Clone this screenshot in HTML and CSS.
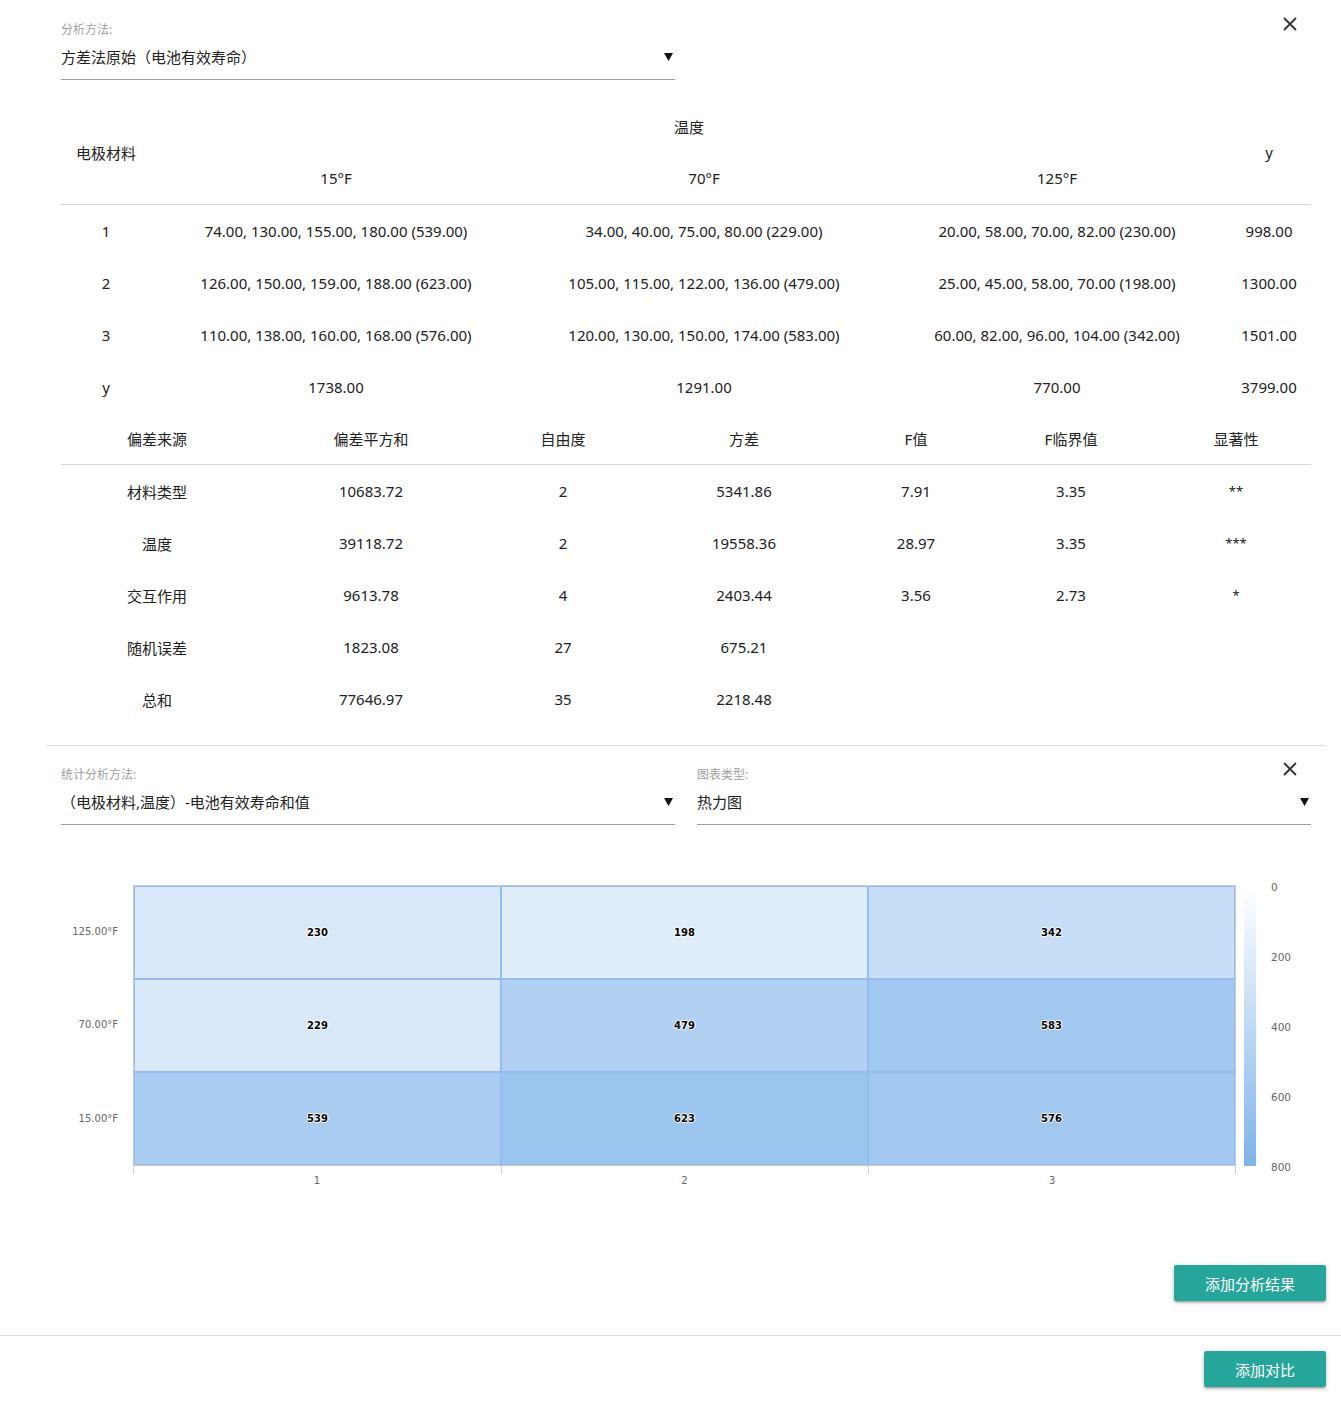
FILE: index.html
```html
<!DOCTYPE html>
<html lang="zh-CN">
<head>
<meta charset="utf-8">
<title>方差分析</title>
<link rel="stylesheet" href="styles.css">
</head>
<body>
<div class="main">
  <section class="panel">
    <button class="close" aria-label="关闭"><svg viewBox="0 0 16 16" width="16" height="16"><path d="M2 2L14 14M14 2L2 14"/></svg></button>
    <div class="fields">
      <div class="field">
        <span class="field-label">分析方法:</span>
        <div class="select"><span>方差法原始（电池有效寿命）</span><svg class="caret" viewBox="0 0 9 9" width="9" height="9"><polygon points="0,1 9,1 4.5,9"/></svg></div>
      </div>
    </div>

    <table class="grid-table raw">
      <colgroup><col class="r1"><col class="r2"><col class="r3"><col class="r4"><col class="r5"></colgroup>
      <thead>
        <tr><th rowspan="2" class="span-head">电极材料</th><th colspan="3">温度</th><th rowspan="2" class="span-head">y</th></tr>
        <tr class="head-last"><th>15°F</th><th>70°F</th><th>125°F</th></tr>
      </thead>
      <tbody>
        <tr><td>1</td><td>74.00, 130.00, 155.00, 180.00 (539.00)</td><td>34.00, 40.00, 75.00, 80.00 (229.00)</td><td>20.00, 58.00, 70.00, 82.00 (230.00)</td><td>998.00</td></tr>
        <tr><td>2</td><td>126.00, 150.00, 159.00, 188.00 (623.00)</td><td>105.00, 115.00, 122.00, 136.00 (479.00)</td><td>25.00, 45.00, 58.00, 70.00 (198.00)</td><td>1300.00</td></tr>
        <tr><td>3</td><td>110.00, 138.00, 160.00, 168.00 (576.00)</td><td>120.00, 130.00, 150.00, 174.00 (583.00)</td><td>60.00, 82.00, 96.00, 104.00 (342.00)</td><td>1501.00</td></tr>
        <tr><td>y</td><td>1738.00</td><td>1291.00</td><td>770.00</td><td>3799.00</td></tr>
      </tbody>
    </table>

    <table class="grid-table result">
      <colgroup><col class="s1"><col class="s2"><col class="s3"><col class="s4"><col class="s5"><col class="s6"><col class="s7"></colgroup>
      <thead>
        <tr class="head-last"><th>偏差来源</th><th>偏差平方和</th><th>自由度</th><th>方差</th><th>F值</th><th>F临界值</th><th>显著性</th></tr>
      </thead>
      <tbody>
        <tr><td>材料类型</td><td>10683.72</td><td>2</td><td>5341.86</td><td>7.91</td><td>3.35</td><td class="sig">**</td></tr>
        <tr><td>温度</td><td>39118.72</td><td>2</td><td>19558.36</td><td>28.97</td><td>3.35</td><td class="sig">***</td></tr>
        <tr><td>交互作用</td><td>9613.78</td><td>4</td><td>2403.44</td><td>3.56</td><td>2.73</td><td class="sig">*</td></tr>
        <tr><td>随机误差</td><td>1823.08</td><td>27</td><td>675.21</td><td></td><td></td><td></td></tr>
        <tr><td>总和</td><td>77646.97</td><td>35</td><td>2218.48</td><td></td><td></td><td></td></tr>
      </tbody>
    </table>
  </section>

  <section class="panel chart-panel">
    <button class="close" aria-label="关闭"><svg viewBox="0 0 16 16" width="16" height="16"><path d="M2 2L14 14M14 2L2 14"/></svg></button>
    <div class="fields">
      <div class="field">
        <span class="field-label">统计分析方法:</span>
        <div class="select"><span>（电极材料,温度）-电池有效寿命和值</span><svg class="caret" viewBox="0 0 9 9" width="9" height="9"><polygon points="0,1 9,1 4.5,9"/></svg></div>
      </div>
      <div class="field">
        <span class="field-label">图表类型:</span>
        <div class="select"><span>热力图</span><svg class="caret" viewBox="0 0 9 9" width="9" height="9"><polygon points="0,1 9,1 4.5,9"/></svg></div>
      </div>
    </div>

    <div class="heatmap">
      <div class="y-axis">
        <div class="y-label">125.00°F</div>
        <div class="y-label">70.00°F</div>
        <div class="y-label">15.00°F</div>
      </div>
      <div class="plot-col">
        <div class="plot">
          <div class="cell" style="background:rgb(218,233,249)"><span>230</span></div>
          <div class="cell" style="background:rgb(223,236,250)"><span>198</span></div>
          <div class="cell" style="background:rgb(200,222,246)"><span>342</span></div>
          <div class="cell" style="background:rgb(218,233,249)"><span>229</span></div>
          <div class="cell" style="background:rgb(178,209,242)"><span>479</span></div>
          <div class="cell" style="background:rgb(162,200,240)"><span>583</span></div>
          <div class="cell" style="background:rgb(169,204,241)"><span>539</span></div>
          <div class="cell" style="background:rgb(155,196,239)"><span>623</span></div>
          <div class="cell" style="background:rgb(163,200,240)"><span>576</span></div>
        </div>
        <div class="x-ticks"><div></div><div></div><div></div></div>
        <div class="x-labels"><div>1</div><div>2</div><div>3</div></div>
      </div>
      <div class="legend">
        <div class="legend-bar"></div>
        <div class="legend-labels"><span>0</span><span>200</span><span>400</span><span>600</span><span>800</span></div>
      </div>
    </div>

    <div class="actions">
      <button class="btn">添加分析结果</button>
    </div>
  </section>
</div>
<footer class="footer">
  <button class="btn">添加对比</button>
</footer>
</body>
</html>
```

FILE: styles.css
```css
* { box-sizing: border-box; }
html, body { margin: 0; padding: 0; background: #fff; }
body {
  width: 1341px;
  font-family: "Noto Sans", "Noto Sans CJK SC", sans-serif;
  font-size: 15px;
  color: #212121;
}
.main { padding: 0 15px 0 46px; }
.panel { position: relative; padding: 22px 15px 20px; }
.chart-panel { border-top: 1px solid #e0e0e0; padding: 21px 15px 34px; }

.close {
  position: absolute; top: 16px; right: 28px;
  width: 16px; height: 16px; padding: 0; border: 0; background: none; cursor: pointer;
}
.chart-panel .close { top: 15px; }
.close svg { display: block; }
.close path { stroke: #333; stroke-width: 1.8; fill: none; }

.fields { display: grid; grid-template-columns: 614px 614px; column-gap: 22px; }
.field-label { display: block; font-size: 12px; line-height: 16px; color: #a0a0a0; }
.select {
  display: flex; justify-content: space-between; align-items: center;
  height: 42px; padding: 6px 2px 10px 0; line-height: 24px;
  border-bottom: 1px solid #9e9e9e;
}
.caret { display: block; fill: #111; }

.grid-table { width: 1250px; border-collapse: separate; border-spacing: 0; table-layout: fixed; font-size: 15px; }
.grid-table th, .grid-table td { box-sizing: content-box; height: 52px; padding: 0; text-align: center; font-weight: normal; color: #212121; }
.grid-table .head-last th, .grid-table .span-head { border-bottom: 1px solid #d6d6d6; }
.raw { margin-top: 20px; }
.result { margin-top: -1px; }
.r1 { width: 90px; } .r2 { width: 370px; } .r3 { width: 366px; } .r4 { width: 340px; } .r5 { width: 84px; }
.s1 { width: 192px; } .s2 { width: 236px; } .s3 { width: 148px; } .s4 { width: 214px; } .s5 { width: 130px; } .s6 { width: 180px; } .s7 { width: 150px; }
.sig { font-size: 13px; }

.heatmap { display: flex; margin-top: 60px; }
.y-axis { width: 72px; display: flex; flex-direction: column; height: 280px; padding-right: 15px; }
.y-label { flex: 1; display: flex; align-items: center; justify-content: flex-end; font-family: "DejaVu Sans", sans-serif; font-size: 10px; color: #666; }
.plot-col { width: 1103px; }
.plot {
  display: grid; grid-template-columns: repeat(3, 1fr); grid-template-rows: repeat(3, 1fr);
  height: 281px; border: 1px solid #c6ccd4;
}
.cell { display: flex; align-items: center; justify-content: center; border: 1px solid #92bdee; }
.cell span {
  font-family: "DejaVu Sans", sans-serif; font-size: 10px; font-weight: bold; color: #000;
  text-shadow: 1px 0 0 #fff, -1px 0 0 #fff, 0 1px 0 #fff, 0 -1px 0 #fff;
}
.x-ticks { display: grid; grid-template-columns: repeat(3, 1fr); height: 8px; }
.x-ticks div { border-left: 1px solid #c8d4e6; }
.x-ticks div:last-child { border-right: 1px solid #c8d4e6; }
.x-labels { display: grid; grid-template-columns: repeat(3, 1fr); }
.x-labels div { text-align: center; font-family: "DejaVu Sans", sans-serif; font-size: 10px; line-height: 14px; color: #666; }

.legend { display: flex; margin-left: 8px; padding-top: 2px; }
.legend-bar { width: 12px; height: 279px; background: linear-gradient(#ffffff, #7fb3ea); }
.legend-labels {
  margin-left: 15px; margin-top: -7px; height: 294px;
  display: flex; flex-direction: column; justify-content: space-between;
  font-family: "DejaVu Sans", sans-serif; font-size: 10.5px; line-height: 14px; color: #666;
}

.actions { display: flex; justify-content: flex-end; margin: 77px -15px 0 0; }
.btn {
  height: 36px; padding: 0 31px; border: 0; border-radius: 2px;
  background: #26a69a; color: #fff; cursor: pointer;
  font-family: "Noto Sans", "Noto Sans CJK SC", sans-serif; font-size: 15px;
  box-shadow: 0 2px 2px 0 rgba(0,0,0,.14), 0 3px 1px -2px rgba(0,0,0,.12), 0 1px 5px 0 rgba(0,0,0,.2);
}
.footer { display: flex; justify-content: flex-end; border-top: 1px solid #e0e0e0; padding: 15px 15px 32px; }
```
